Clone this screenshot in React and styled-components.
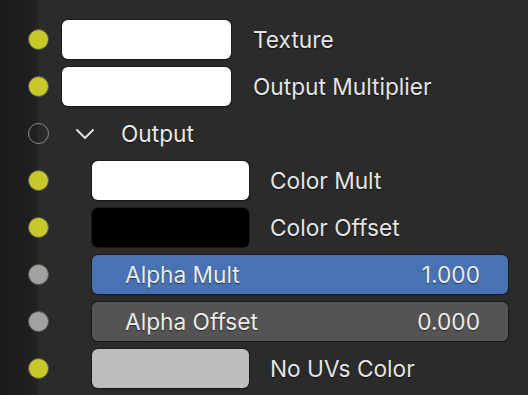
import React from 'react'
import styled, { createGlobalStyle } from 'styled-components'

const GlobalStyle = createGlobalStyle`
	html, body {
		margin: 0;
		padding: 0;
		width: 528px;
		height: 395px;
		overflow: hidden;
		background: linear-gradient(to right, #1b1b1b 0, #1f1f1f 30px, #232323 38px, #2b2b2b 39px, #2b2b2b 100%);
		font-family: Inter, 'Noto Sans', 'DejaVu Sans', sans-serif;
	}
`

const Panel = styled.div`
	display: flex;
	flex-direction: column;
	padding: 16px 20px 0 28px;
`

const Row = styled.div`
	display: flex;
	align-items: center;
	height: 47px;
`

const Socket = styled.div`
	flex: none;
	width: 21px;
	height: 21px;
	border-radius: 50%;
	box-sizing: border-box;
	background: ${(p) => (p.$kind === 'gray' ? '#a1a1a1' : p.$kind === 'empty' ? 'transparent' : '#c8c82a')};
	border: ${(p) => (p.$kind === 'empty' ? '1.6px solid #8e8e8e' : '1px solid #5a5a4a')};
	margin-right: ${(p) => (p.$indent ? 43 : 13)}px;
`

const Swatch = styled.div`
	flex: none;
	width: ${(p) => (p.$indent ? 157 : 169)}px;
	height: 39px;
	border-radius: 6px;
	background: ${(p) => p.$color};
	box-shadow: 0 0 0 1px rgba(20, 20, 20, 0.55), 0 1px 2px rgba(0, 0, 0, 0.35);
`

const Label = styled.span`
	margin-left: ${(p) => (p.$indent ? 21 : 22)}px;
	color: #e4e4e4;
	font-size: 22.7px;
	text-shadow: 0 1px 1px rgba(0, 0, 0, 0.6);
	white-space: nowrap;
`

const Chevron = styled.svg`
	flex: none;
	width: 20px;
	height: 12px;
	margin-left: 13px;
	margin-right: 26px;
`

const Header = styled.span`
	color: #e8e8e8;
	font-size: 22.7px;
	text-shadow: 0 1px 1px rgba(0, 0, 0, 0.6);
`

const Slider = styled.div`
	flex: 1;
	display: flex;
	justify-content: space-between;
	align-items: center;
	height: 39px;
	box-sizing: border-box;
	padding: 0 28px 0 33px;
	border-radius: 6px;
	background: ${(p) => (p.$active ? '#4772b3' : '#545454')};
	box-shadow: 0 0 0 1px rgba(20, 20, 20, 0.55), 0 1px 2px rgba(0, 0, 0, 0.35);
	color: #ececec;
	font-size: 22.7px;
	text-shadow: 0 1px 1px rgba(0, 0, 0, 0.55);
`

const colorRows = [
	{ label: 'Color Mult', color: '#ffffff' },
	{ label: 'Color Offset', color: '#000000' },
]

const sliders = [
	{ label: 'Alpha Mult', value: '1.000', active: true },
	{ label: 'Alpha Offset', value: '0.000', active: false },
]

export default function App() {
	return (
		<>
			<GlobalStyle />
			<Panel>
				<Row>
					<Socket />
					<Swatch $color="#ffffff" />
					<Label>Texture</Label>
				</Row>
				<Row>
					<Socket />
					<Swatch $color="#ffffff" />
					<Label>Output Multiplier</Label>
				</Row>
				<Row>
					<Socket $kind="empty" />
					<Chevron viewBox="0 0 20 12">
						<path d="M2 2 L10 10 L18 2" fill="none" stroke="#e0e0e0" strokeWidth="2" strokeLinecap="round" strokeLinejoin="round" />
					</Chevron>
					<Header>Output</Header>
				</Row>
				{colorRows.map((row) => (
					<Row key={row.label}>
						<Socket $indent />
						<Swatch $indent $color={row.color} />
						<Label $indent>{row.label}</Label>
					</Row>
				))}
				{sliders.map((s) => (
					<Row key={s.label}>
						<Socket $kind="gray" $indent />
						<Slider $active={s.active}>
							<span>{s.label}</span>
							<span>{s.value}</span>
						</Slider>
					</Row>
				))}
				<Row>
					<Socket $indent />
					<Swatch $indent $color="#bdbdbd" />
					<Label $indent>No UVs Color</Label>
				</Row>
			</Panel>
		</>
	)
}
